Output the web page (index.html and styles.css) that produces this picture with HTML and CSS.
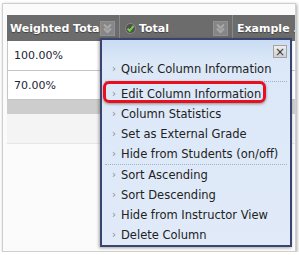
FILE: index.html
```html
<!DOCTYPE html>
<html lang="en">
<head>
    <meta charset="UTF-8">
    <meta name="viewport" content="width=device-width, initial-scale=1.0">
    <title>Grade Center</title>
    <link rel="stylesheet" href="styles.css">
</head>
<body>
    <div class="frame">
        <div class="grid">
            <div class="head">
                <div class="hcell col1">
                    <span class="label">Weighted Tota</span>
                    <span class="colmenu">
                        <svg width="11" height="11" viewBox="0 0 11 11"><path d="M2 1.5 L5.5 5 L9 1.5 M2 5.5 L5.5 9 L9 5.5" fill="none" stroke="#a9a9a9" stroke-width="2"/></svg>
                    </span>
                </div>
                <div class="hcell col2">
                    <span class="check">
                        <svg width="11" height="11" viewBox="0 0 11 11"><circle cx="5.5" cy="5.5" r="5" fill="#505050" stroke="#8a8a8a" stroke-width="1"/><path d="M2.6 5.6 L4.7 7.8 L8.6 2.8" fill="none" stroke="#6fd63f" stroke-width="2"/></svg>
                    </span>
                    <span class="label">Total</span>
                    <span class="colmenu">
                        <svg width="11" height="11" viewBox="0 0 11 11"><path d="M2 1.5 L5.5 5 L9 1.5 M2 5.5 L5.5 9 L9 5.5" fill="none" stroke="#a9a9a9" stroke-width="2"/></svg>
                    </span>
                </div>
                <div class="hcell col3">
                    <span class="label">Example …</span>
                </div>
            </div>
            <div class="row first">
                <div class="cell col1">100.00%</div>
                <div class="cell col2"></div>
                <div class="cell col3"></div>
            </div>
            <div class="row">
                <div class="cell col1">70.00%</div>
                <div class="cell col2"></div>
                <div class="cell col3"></div>
            </div>
            <div class="footbar"></div>
            <div class="footpad"></div>
        </div>

        <div class="menu">
            <div class="menu-top">
                <span class="close">&times;</span>
            </div>
            <ul class="group first-group">
                <li>Quick Column Information</li>
            </ul>
            <ul class="group second-group">
                <li class="highlight">Edit Column Information</li>
                <li>Column Statistics</li>
                <li>Set as External Grade</li>
                <li>Hide from Students (on/off)</li>
            </ul>
            <ul class="group third-group">
                <li>Sort Ascending</li>
                <li>Sort Descending</li>
                <li>Hide from Instructor View</li>
                <li>Delete Column</li>
            </ul>
        </div>
    </div>
</body>
</html>
```

FILE: styles.css
```css
body {
    margin: 0;
    background-color: #ffffff;
    font-family: "DejaVu Sans", Verdana, sans-serif;
}
.frame {
    position: relative;
    margin: 3px 0 0 2px;
    padding: 11px 0 0 4px;
    width: 288px;
    height: 236px;
    border: 1px solid #cfcfcf;
    background-color: #fbfbfb;
    box-shadow: 1px 1px 3px rgba(0, 0, 0, 0.35);
    overflow: hidden;
}
.grid {
    width: 100%;
}
.head {
    display: flex;
    height: 26px;
    background-color: #6c6c6c;
}
.hcell {
    display: flex;
    align-items: center;
    box-sizing: border-box;
    border-right: 1px solid #888888;
    padding-left: 3px;
    color: #ffffff;
    font-weight: bold;
    font-size: 11px;
    white-space: nowrap;
    overflow: hidden;
    text-shadow: 0 1px 1px rgba(0, 0, 0, 0.4);
}
.col1 { width: 113px; }
.col2 { width: 113px; }
.col3 { flex: 1; min-width: 0; border-right: none; }
.hcell .label {
    flex: 1;
}
.colmenu {
    display: flex;
    align-items: center;
    justify-content: center;
    width: 15px;
    height: 15px;
    margin-right: 4px;
    background-color: #868686;
    border: 1px solid #929292;
    box-sizing: border-box;
}
.check {
    display: flex;
    margin: 0 3px 0 2px;
}
.col3 .label {
    padding-left: 1px;
}
.row {
    display: flex;
    height: 28px;
    background-color: #ffffff;
    border-bottom: 1px solid #c6c6c6;
}
.row.first {
    height: 29px;
}
.cell {
    box-sizing: border-box;
    display: flex;
    align-items: center;
    padding-left: 6px;
    border-left: 1px solid #c6c6c6;
    font-size: 11px;
    color: #1c2433;
}
.footbar {
    height: 14px;
    background-color: #cdcdcd;
}
.footpad {
    height: 29px;
    background-color: #f4f4f4;
    border-bottom: 1px solid #e6e6e6;
}

/* column menu */
.menu {
    position: absolute;
    left: 97px;
    top: 34px;
    width: 188px;
    height: 205px;
    border: 2px solid #3a4470;
    background: linear-gradient(#c9dcf3, #dce8f8 22px, #e0eaf9);
    box-shadow: -1px 1px 3px rgba(0, 0, 0, 0.35);
    font-size: 11.5px;
    color: #222222;
}
.menu-top {
    display: flex;
    justify-content: flex-end;
    height: 19px;
    padding: 5px 3px 0 0;
    box-sizing: border-box;
}
.close {
    display: flex;
    align-items: center;
    justify-content: center;
    width: 12px;
    height: 11px;
    border: 1px solid #a4a4a4;
    background: linear-gradient(#eeeeee, #cfcfcf);
    font-size: 12px;
    line-height: 1;
    color: #333333;
}
.group {
    list-style: none;
    margin: 0 3px;
    padding: 0;
}
.group li {
    position: relative;
    height: 20px;
    line-height: 20px;
    padding-left: 16px;
    white-space: nowrap;
}
.group li::before {
    content: "\203A";
    position: absolute;
    left: 7px;
    color: #8a8a8a;
    font-size: 10px;
}
.first-group {
    border-bottom: 1px dotted #9fb3cf;
    padding-bottom: 2px;
    margin-bottom: 2px;
}
.second-group {
    border-bottom: 1px dotted #9fb3cf;
}
.highlight::after {
    content: "";
    position: absolute;
    left: -2px;
    top: -3px;
    width: 157px;
    height: 16px;
    border: 3px solid #e8101c;
    border-radius: 6px;
    box-shadow: 0 1px 3px rgba(0, 0, 0, 0.4);
}
```
